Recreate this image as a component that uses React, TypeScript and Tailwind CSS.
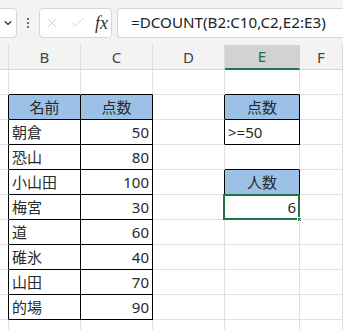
import { ChevronDown, X, Check } from 'lucide-react'

const cols = [9, 72, 72, 72, 75, 43]
const letters = ['', 'B', 'C', 'D', 'E', 'F']

type Cell = { text?: string; align?: 'left' | 'right' | 'center'; head?: boolean; r?: boolean; b?: boolean }

const scores: [string, string][] = [
  ['朝倉', '50'],
  ['恐山', '80'],
  ['小山田', '100'],
  ['梅宮', '30'],
  ['道', '60'],
  ['碓氷', '40'],
  ['山田', '70'],
  ['的場', '90'],
]

function buildRows(): Cell[][] {
  const rows: Cell[][] = []
  for (let i = 0; i < 11; i++) rows.push(cols.map(() => ({})))
  // table B2:C10
  rows[0][1].b = true
  rows[0][2].b = true
  for (let r = 1; r <= 9; r++) {
    rows[r][0].r = true
    rows[r][1].r = true
    rows[r][2].r = true
    rows[r][1].b = true
    rows[r][2].b = true
  }
  rows[1][1] = { ...rows[1][1], text: '名前', align: 'center', head: true }
  rows[1][2] = { ...rows[1][2], text: '点数', align: 'center', head: true }
  scores.forEach(([n, s], i) => {
    rows[i + 2][1] = { ...rows[i + 2][1], text: n, align: 'left' }
    rows[i + 2][2] = { ...rows[i + 2][2], text: s, align: 'right' }
  })
  // criteria E2:E3
  rows[0][4].b = true
  for (const r of [1, 2]) {
    rows[r][3].r = true
    rows[r][4].r = true
    rows[r][4].b = true
  }
  rows[1][4] = { ...rows[1][4], text: '点数', align: 'center', head: true }
  rows[2][4] = { ...rows[2][4], text: '>=50', align: 'left' }
  // result E5:E6
  rows[3][4].b = true
  rows[4][3].r = true
  rows[4][4] = { text: '人数', align: 'center', head: true, r: true, b: true }
  rows[5][4] = { text: '6', align: 'right' }
  return rows
}

export default function App() {
  const rows = buildRows()
  return (
    <div
      className="w-[343px] h-[330px] overflow-hidden bg-white text-[#2a2a2a]"
      style={{ fontFamily: '"Noto Sans", "Noto Sans CJK JP", sans-serif' }}
    >
      {/* formula bar */}
      <div className="h-[45px] bg-[#f3f3f3] flex items-center">
        <div className="w-[17px] h-[30px] bg-white border border-[#d6d6d6] border-l-0 rounded-r-[4px] flex items-center justify-center">
          <ChevronDown size={12} strokeWidth={2.2} className="text-[#333]" />
        </div>
        <div className="w-[22px] flex flex-col items-center gap-[2px]">
          <span className="w-[2px] h-[2px] bg-[#444] rounded-full" />
          <span className="w-[2px] h-[2px] bg-[#444] rounded-full" />
          <span className="w-[2px] h-[2px] bg-[#444] rounded-full" />
        </div>
        <div className="w-[73px] h-[30px] bg-white border border-[#d6d6d6] rounded-[4px] flex items-center pl-[4px]">
          <X size={16} strokeWidth={1.1} className="text-[#c4c4c4]" />
          <Check size={17} strokeWidth={1.1} className="text-[#c4c4c4] ml-[9px]" />
          <span
            className="ml-[9px] text-[18px] italic text-[#333] leading-none"
            style={{ fontFamily: '"Liberation Serif", serif' }}
          >
            fx
          </span>
        </div>
        <div className="ml-[5px] flex-1 h-[30px] bg-white border border-[#d6d6d6] border-r-0 rounded-l-[4px] flex items-center pl-[13px] text-[15.2px] text-[#222] whitespace-nowrap">
          =DCOUNT(B2:C10,C2,E2:E3)
        </div>
      </div>

      {/* column header */}
      <div className="flex h-[25px] bg-[#f3f3f3]">
        {cols.map((w, i) => (
          <div
            key={i}
            style={{ width: w }}
            className={
              'shrink-0 flex items-center justify-center text-[15px] border-r ' +
              (i === 4
                ? 'bg-[#d2d2d2] text-[#1e6b3f] border-[#d2d2d2] border-b-2 border-b-[#217346]'
                : 'text-[#444] border-[#dcdcdc] border-b border-b-[#d6d6d6]')
            }
          >
            {letters[i]}
          </div>
        ))}
      </div>

      {/* grid */}
      {rows.map((row, ri) => (
        <div key={ri} className="flex h-[25px]">
          {row.map((c, ci) => (
            <div
              key={ci}
              style={{ width: cols[ci] }}
              className={
                'shrink-0 flex items-center border-r border-b px-[3px] text-[15px] leading-none relative ' +
                (c.r ? 'border-r-black ' : 'border-r-[#e1e1e1] ') +
                (c.b ? 'border-b-black ' : 'border-b-[#e1e1e1] ') +
                (c.head ? 'bg-[#9bc2e6] ' : '') +
                (c.align === 'center' ? 'justify-center' : c.align === 'right' ? 'justify-end' : 'justify-start')
              }
            >
              {c.text}
              {ri === 5 && ci === 4 && (
                <>
                  <div className="absolute left-[-2px] top-[-1px] right-[-1px] bottom-[-1px] border-2 border-[#217346]" />
                  <div className="absolute right-[-3px] bottom-[-3px] w-[5px] h-[5px] bg-[#217346] border border-white" />
                </>
              )}
            </div>
          ))}
        </div>
      ))}
    </div>
  )
}
